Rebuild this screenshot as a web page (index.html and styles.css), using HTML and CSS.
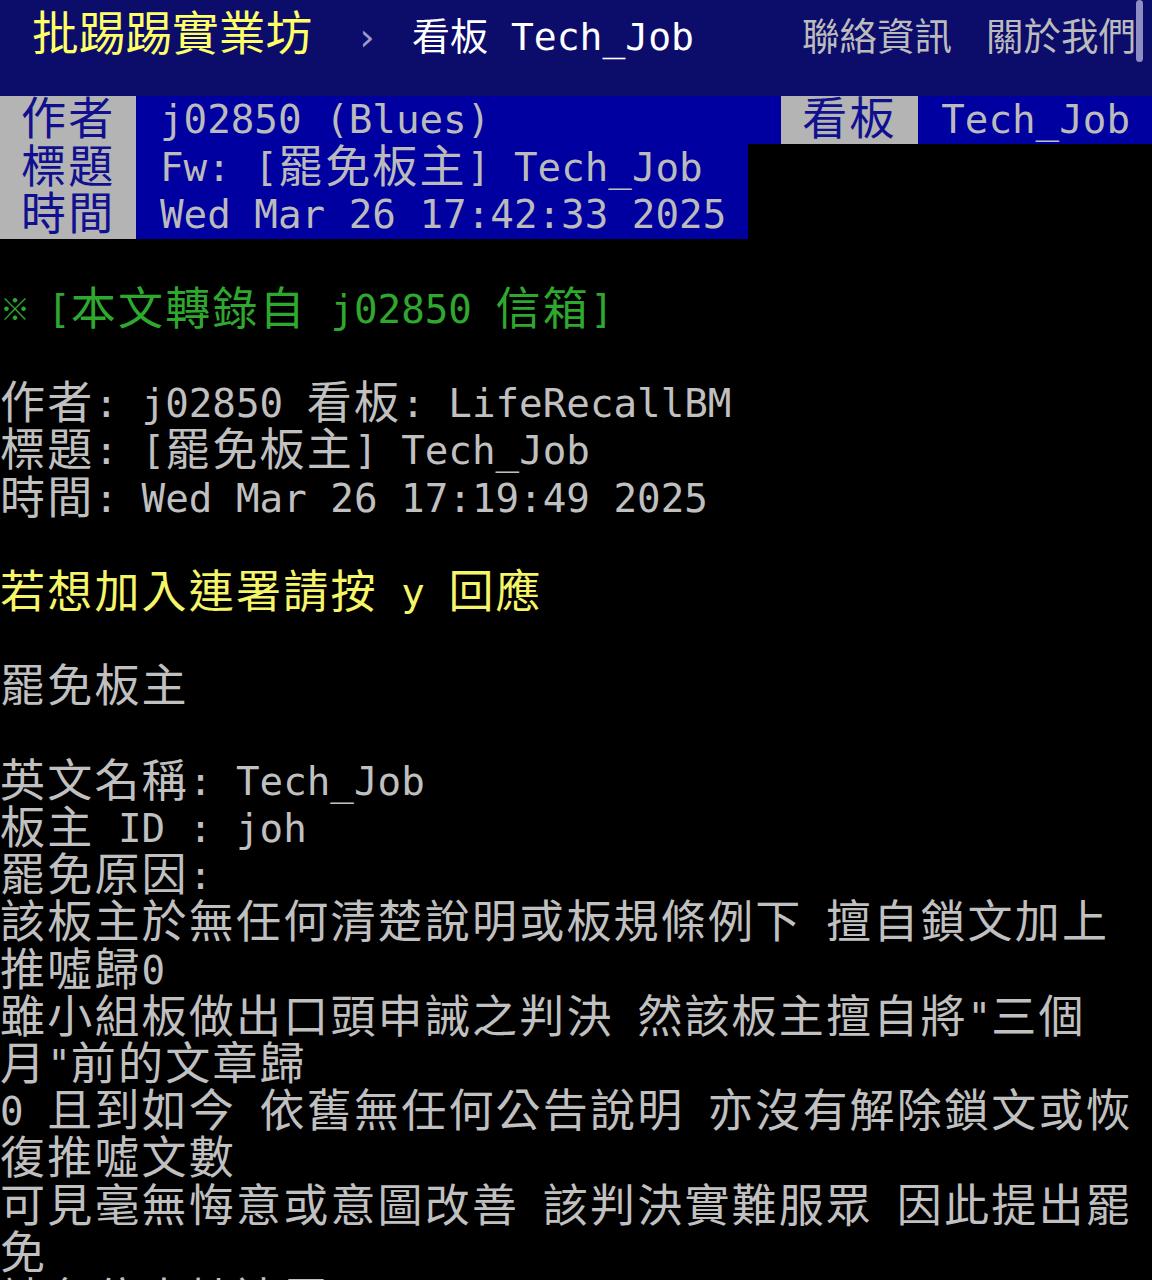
FILE: index.html
```html
<!DOCTYPE html>
<html lang="zh-Hant">
<head>
    <meta charset="UTF-8">
    <meta name="viewport" content="width=device-width, initial-scale=1.0">
    <title>[罷免板主] Tech_Job - 看板 Tech_Job - 批踢踢實業坊</title>
    <link rel="stylesheet" href="styles.css">
</head>
<body>
    <div class="topbar">
        <a class="logo" href="#">批踢踢實業坊</a>
        <span class="sep">›</span>
        <a class="board" href="#">看板 Tech_Job</a>
        <div class="links">
            <a href="#">聯絡資訊</a>
            <a href="#">關於我們</a>
        </div>
        <div class="scroll-thumb"></div>
    </div>

    <div class="meta">
        <div class="meta-line wide">
            <span class="tag"><span class="w">作者</span></span>
            <span class="val">j02850 (Blues)</span>
            <span class="tag right"><span class="w">看板</span></span>
            <span class="val last">Tech_Job</span>
        </div>
        <div class="meta-line">
            <span class="tag"><span class="w">標題</span></span>
            <span class="val">Fw: [<span class="w">罷免板主</span>] Tech_Job</span>
        </div>
        <div class="meta-line">
            <span class="tag"><span class="w">時間</span></span>
            <span class="val">Wed Mar 26 17:42:33 2025</span>
        </div>
    </div>

    <div class="main">
<span class="green"><span class="ref">※</span> [<span class="w">本文轉錄自</span> j02850 <span class="w">信箱</span>]</span>

<span class="w">作者</span>: j02850 <span class="w">看板</span>: LifeRecallBM
<span class="w">標題</span>: [<span class="w">罷免板主</span>] Tech_Job
<span class="w">時間</span>: Wed Mar 26 17:19:49 2025

<span class="yellow"><span class="w">若想加入連署請按</span> y <span class="w">回應</span></span>

<span class="w">罷免板主</span>

<span class="w">英文名稱</span>: Tech_Job
<span class="w">板主</span> ID : joh
<span class="w">罷免原因</span>:
<span class="w">該板主於無任何清楚說明或板規條例下</span> <span class="w">擅自鎖文加上推噓歸</span>0
<span class="w">雖小組板做出口頭申誡之判決</span> <span class="w">然該板主擅自將</span>"<span class="w">三個</span><span class="nb"><span class="w">月</span>"</span><span class="w">前的文章歸</span>
0 <span class="w">且到如今</span> <span class="w">依舊無任何公告說明</span> <span class="w">亦沒有解除鎖文或恢復推噓文數</span>
<span class="w">可見毫無悔意或意圖改善</span> <span class="w">該判決實難服眾</span> <span class="w">因此提出罷免</span>
<span class="w">請各位支持連署</span>
</div>
</body>
</html>
```
FILE: styles.css
```css
body {
    margin: 0;
    background-color: #000;
    color: #c0c0c0;
    font-family: "DejaVu Sans Mono", "Noto Sans CJK TC", monospace;
    font-size: 39.2px;
    line-height: 47.2px;
}
a {
    text-decoration: none;
}

/* top bar */
.topbar {
    position: relative;
    display: flex;
    align-items: baseline;
    height: 96px;
    padding: 0 16px 0 32px;
    box-sizing: border-box;
    background-color: #0c0c6b;
    line-height: 60px;
}
.logo {
    font-family: "Noto Sans CJK TC", sans-serif;
    font-size: 46.7px;
    color: #ffff66;
}
.sep {
    font-size: 38px;
    color: #9a9acb;
    margin: 0 34px 0 43px;
}
.board {
    font-size: 38px;
    color: #ffffff;
}
.links {
    display: flex;
    gap: 34px;
    margin-left: auto;
    font-family: "Noto Sans CJK TC", sans-serif;
    font-size: 37.5px;
}
.links a {
    color: #bbbbbb;
}
.scroll-thumb {
    position: absolute;
    top: 0;
    right: 9px;
    width: 7px;
    height: 62px;
    border-radius: 4px;
    background-color: #8e8ec4;
}

/* article header */
.meta-line {
    display: flex;
    width: 748px;
    height: 47.5px;
    line-height: 47.5px;
    background-color: #0000a0;
}
.meta-line.wide {
    width: auto;
}
.tag {
    padding: 0 21px;
    background-color: #b4b4b4;
    color: #10108f;
}
.tag.right {
    margin-left: auto;
}
.val {
    padding-left: 23.6px;
    color: #bbbbbb;
}
.val.last {
    padding-right: 22px;
}

/* article body */
.main {
    white-space: pre-wrap;
}
.w {
    font-family: "Noto Sans CJK TC", sans-serif;
    font-size: 45px;
    letter-spacing: 2.2px;
    line-height: 0;
    vertical-align: -2px;
}
.ref {
    font-family: "Noto Sans CJK TC", sans-serif;
    font-size: 30px;
    letter-spacing: -6.4px;
    line-height: 0;
    vertical-align: 3px;
}
.nb {
    white-space: nowrap;
}
.green {
    color: #2fa82f;
}
.yellow {
    color: #f5f56a;
}
```
